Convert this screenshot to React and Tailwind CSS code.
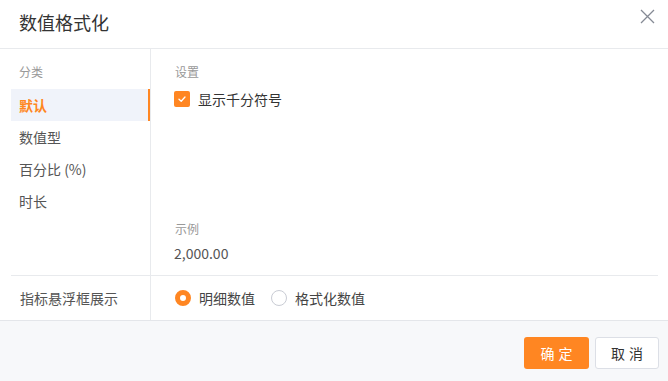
import React, { useState } from 'react';

const font = { fontFamily: '"Noto Sans CJK SC", "Noto Sans", sans-serif' };

const cats = ['默认', '数值型', '百分比 (%)', '时长'];

function Check() {
  return (
    <span className="w-4 h-4 rounded-[2px] bg-[#ff8622] flex items-center justify-center">
      <svg width="10" height="10" viewBox="0 0 10 10" fill="none">
        <path d="M2 5.2 L4.2 7.2 L8 3" stroke="#fff" strokeWidth="1.3" strokeLinecap="round" strokeLinejoin="round" />
      </svg>
    </span>
  );
}

function Radio({ on, label }) {
  return (
    <label className="flex items-center gap-2 cursor-pointer">
      {on ? (
        <span className="w-4 h-4 rounded-full border-[5px] border-[#ff8622] bg-white" />
      ) : (
        <span className="w-4 h-4 rounded-full border border-[#c9ccd4] bg-white" />
      )}
      <span className="text-[14px] text-[#444]">{label}</span>
    </label>
  );
}

export default function App() {
  const [active, setActive] = useState(0);
  return (
    <div className="w-[668px] h-[381px] bg-white flex flex-col" style={font}>
      {/* Header */}
      <div className="h-[49px] shrink-0 border-b border-[#e8eaed] flex items-start justify-between pl-[19px] pr-[13px]">
        <div className="text-[18px] leading-[24px] mt-[10px] text-[#333]">数值格式化</div>
        <svg className="mt-[9px]" width="15" height="15" viewBox="0 0 15 15" fill="none">
          <path d="M1 1 L14 14 M14 1 L1 14" stroke="#858a94" strokeWidth="1.3" />
        </svg>
      </div>

      {/* Body */}
      <div className="flex-1 flex flex-col pl-[11px] pr-[10px]">
        <div className="h-[227px] flex border-b border-[#e8eaed]">
          <div className="w-[140px] border-r border-[#e8eaed] flex flex-col">
            <div className="mt-[13px] h-[20px] leading-[20px] px-[8px] text-[12px] text-[#999]">分类</div>
            <div className="mt-[7px] flex flex-col">
              {cats.map((c, i) => (
                <div
                  key={c}
                  onClick={() => setActive(i)}
                  className={
                    i === active
                      ? 'h-[32px] leading-[32px] px-[8px] text-[14px] font-bold text-[#ff8622] bg-[#f0f3fa] border-r-2 border-[#ff8622] cursor-pointer'
                      : 'h-[32px] leading-[32px] px-[8px] text-[14px] text-[#555] cursor-pointer'
                  }
                >
                  {c}
                </div>
              ))}
            </div>
          </div>
          <div className="flex-1 flex flex-col pl-[23px]">
            <div className="mt-[13px] h-[20px] leading-[20px] px-[1px] text-[12px] text-[#999]">设置</div>
            <div className="mt-[7px] h-[20px] flex items-center gap-2">
              <Check />
              <span className="text-[14px] text-[#333]">显示千分符号</span>
            </div>
            <div className="mt-auto h-[20px] leading-[20px] px-[1px] text-[12px] text-[#999]">示例</div>
            <div className="mt-[4px] mb-[12px] h-[20px] leading-[20px] text-[14px] text-[#555]">2,000.00</div>
          </div>
        </div>
        <div className="h-[44px] flex">
          <div className="w-[140px] border-r border-[#e8eaed] flex items-center pl-[9px] text-[14px] text-[#555]">
            指标悬浮框展示
          </div>
          <div className="flex-1 flex items-center gap-[16px] pl-[24px]">
            <Radio on label="明细数值" />
            <Radio label="格式化数值" />
          </div>
        </div>
      </div>

      {/* Footer */}
      <div className="h-[61px] shrink-0 border-t border-[#e4e6ea] bg-[#f7f8fa] flex items-start justify-end gap-[6px] pt-[16px] pr-[9px]">
        <button className="w-[65px] h-[32px] rounded-[3px] bg-[#ff8622] text-white text-[14px] tracking-[4px] pl-[4px]">确定</button>
        <button className="w-[64px] h-[32px] rounded-[3px] bg-white border border-[#dcdfe6] text-[#333] text-[14px] tracking-[4px] pl-[4px]">取消</button>
      </div>
    </div>
  );
}
